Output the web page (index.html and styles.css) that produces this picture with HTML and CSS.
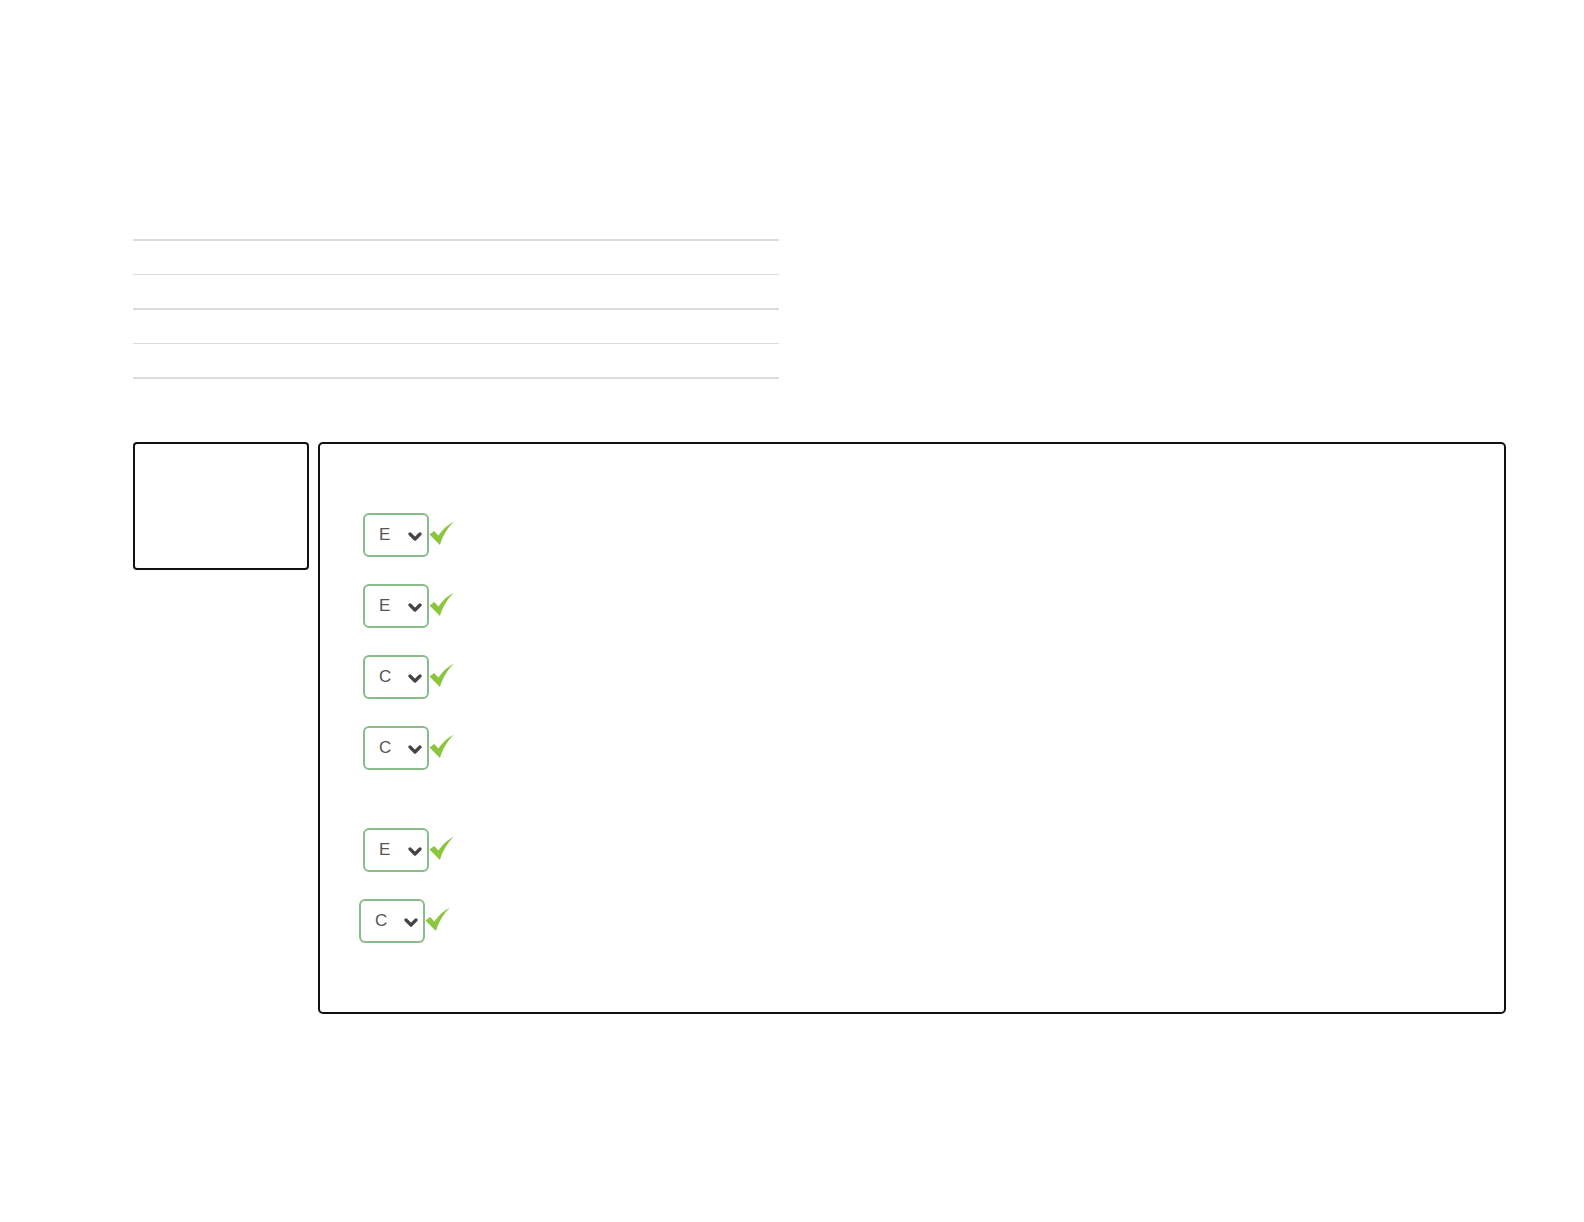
FILE: index.html
```html
<!DOCTYPE html>
<html>
    <head>
        <meta name="viewport" content="width=device-width, initial-scale=1.0">
        <link rel="stylesheet" href="styles.css">
    </head>
    <body>

        <div class="page">

            <!-- empty list table -->
            <div class="lines">
                <div class="line thick"></div>
                <div class="line thin"></div>
                <div class="line thick"></div>
                <div class="line thin"></div>
                <div class="line-end"></div>
            </div>

            <div class="boxes">
                <div class="side-box"></div>

                <div class="main-box">
                    <div class="group">
                        <div class="answer">
                            <div class="pick"><span class="pick-value">E</span><svg class="chev" viewBox="0 0 14 9"><path d="M2 2 L7 7 L12 2" /></svg></div>
                            <svg class="tick" viewBox="0 0 24 24"><path d="M0.5 13 L5 9.5 L9 14 C13 8 18 3.5 24 0.5 C18.5 6 13.5 13 10.5 23 Z" /></svg>
                        </div>
                        <div class="answer">
                            <div class="pick"><span class="pick-value">E</span><svg class="chev" viewBox="0 0 14 9"><path d="M2 2 L7 7 L12 2" /></svg></div>
                            <svg class="tick" viewBox="0 0 24 24"><path d="M0.5 13 L5 9.5 L9 14 C13 8 18 3.5 24 0.5 C18.5 6 13.5 13 10.5 23 Z" /></svg>
                        </div>
                        <div class="answer">
                            <div class="pick"><span class="pick-value">C</span><svg class="chev" viewBox="0 0 14 9"><path d="M2 2 L7 7 L12 2" /></svg></div>
                            <svg class="tick" viewBox="0 0 24 24"><path d="M0.5 13 L5 9.5 L9 14 C13 8 18 3.5 24 0.5 C18.5 6 13.5 13 10.5 23 Z" /></svg>
                        </div>
                        <div class="answer">
                            <div class="pick"><span class="pick-value">C</span><svg class="chev" viewBox="0 0 14 9"><path d="M2 2 L7 7 L12 2" /></svg></div>
                            <svg class="tick" viewBox="0 0 24 24"><path d="M0.5 13 L5 9.5 L9 14 C13 8 18 3.5 24 0.5 C18.5 6 13.5 13 10.5 23 Z" /></svg>
                        </div>
                    </div>

                    <div class="group">
                        <div class="answer">
                            <div class="pick"><span class="pick-value">E</span><svg class="chev" viewBox="0 0 14 9"><path d="M2 2 L7 7 L12 2" /></svg></div>
                            <svg class="tick" viewBox="0 0 24 24"><path d="M0.5 13 L5 9.5 L9 14 C13 8 18 3.5 24 0.5 C18.5 6 13.5 13 10.5 23 Z" /></svg>
                        </div>
                        <div class="answer shifted">
                            <div class="pick"><span class="pick-value">C</span><svg class="chev" viewBox="0 0 14 9"><path d="M2 2 L7 7 L12 2" /></svg></div>
                            <svg class="tick" viewBox="0 0 24 24"><path d="M0.5 13 L5 9.5 L9 14 C13 8 18 3.5 24 0.5 C18.5 6 13.5 13 10.5 23 Z" /></svg>
                        </div>
                    </div>
                </div>
            </div>

        </div>

    </body>
</html>
```

FILE: styles.css
```css
body {
    margin: 0;
    background: #ffffff;
    font-family: "Liberation Sans", Arial, sans-serif;
}

.page {
    padding: 239px 0 0 133px;
}

/* empty table rows */
.lines {
    width: 646px;
}

.line {
    height: 33px;
    border-top-style: solid;
    border-top-color: #dcdcdc;
}

.line.thick {
    border-top-width: 2px;
}

.line.thin {
    border-top-width: 1px;
}

.line-end {
    border-top: 2px solid #dcdcdc;
}

/* boxes */
.boxes {
    display: flex;
    align-items: flex-start;
    gap: 9px;
    margin-top: 63px;
}

.side-box {
    box-sizing: border-box;
    width: 176px;
    height: 128px;
    border: 2px solid #111111;
    border-radius: 4px;
}

.main-box {
    box-sizing: border-box;
    width: 1188px;
    height: 572px;
    padding-top: 69px;
    padding-left: 43px;
    border: 2px solid #111111;
    border-radius: 5px;
}

.group {
    display: flex;
    flex-direction: column;
    gap: 27px;
}

.group + .group {
    margin-top: 58px;
}

.answer {
    display: flex;
    align-items: center;
    height: 44px;
}

.answer.shifted {
    margin-left: -4px;
}

.pick {
    box-sizing: border-box;
    display: flex;
    align-items: center;
    width: 66px;
    height: 44px;
    padding-left: 14px;
    border: 2px solid #8abb8a;
    border-radius: 6px;
    color: #555555;
    font-size: 17px;
}

.pick-value {
    width: 29px;
}

.chev {
    width: 14px;
    height: 9px;
    margin-top: 2px;
}

.chev path {
    fill: none;
    stroke: #444444;
    stroke-width: 3.2;
    stroke-linecap: round;
    stroke-linejoin: round;
}

.tick {
    width: 25px;
    height: 25px;
    margin-left: 0;
    margin-top: -3px;
}

.tick path {
    fill: #8cc63f;
}
```
